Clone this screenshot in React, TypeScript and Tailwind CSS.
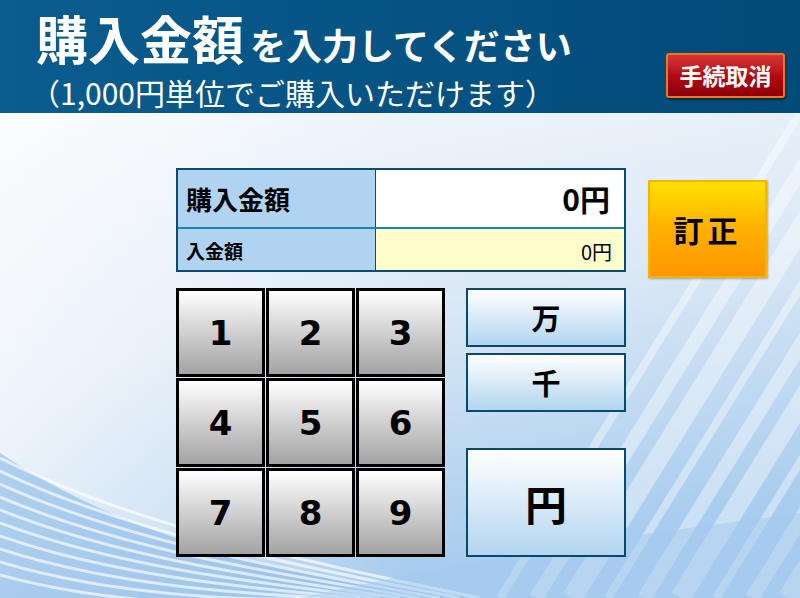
import React from "react";

const jp = "font-['Noto_Sans_CJK_JP','Noto_Sans',sans-serif]";

const keys = ["1", "2", "3", "4", "5", "6", "7", "8", "9"];

function Waves() {
  // background decoration: diagonal light streaks + sweeping curves
  const curves = Array.from({ length: 10 }, (_, i) => i);
  const streaks = Array.from({ length: 10 }, (_, i) => i);
  return (
    <svg className="absolute inset-0 w-full h-full" viewBox="0 0 800 485" preserveAspectRatio="none">
      <defs>
        <linearGradient id="bg" x1="0" y1="0" x2="0.3" y2="1">
          <stop offset="0" stopColor="#f4f8fc" />
          <stop offset="0.5" stopColor="#dce9f6" />
          <stop offset="1" stopColor="#a9cdee" />
        </linearGradient>
        <linearGradient id="bg2" x1="0" y1="0" x2="1" y2="0">
          <stop offset="0" stopColor="#ffffff" stopOpacity="0.6" />
          <stop offset="0.5" stopColor="#ffffff" stopOpacity="0" />
        </linearGradient>
      </defs>
      <rect width="800" height="485" fill="url(#bg)" />
      <rect width="800" height="485" fill="url(#bg2)" />
      {streaks.map((i) => (
        <path
          key={i}
          d={`M${500 + i * 36} 485 L${800 + i * 36} 0`}
          stroke="#ffffff"
          strokeOpacity={0.4}
          strokeWidth={8 + (i % 3) * 6}
        />
      ))}
      <path d="M0 340 C120 420 260 460 470 485 L0 485 Z" fill="#8dbbe8" opacity="0.65" />
      {curves.map((i) => (
        <path
          key={i}
          d={`M0 ${345 + i * 13} C120 ${405 + i * 10} 260 ${440 + i * 6} ${480 - i * 20} 485`}
          stroke="#ffffff"
          strokeOpacity={0.65}
          strokeWidth={3}
          fill="none"
        />
      ))}
      <path d="M300 485 C500 440 650 420 800 400 L800 485 Z" fill="#a3c9ee" opacity="0.5" />
    </svg>
  );
}

export default function App() {
  return (
    <div className={`w-[800px] h-[598px] flex flex-col overflow-hidden ${jp}`}>
      <header className="h-[113px] shrink-0 bg-gradient-to-r from-[#0b5c8f] to-[#024a78] flex items-start justify-between pl-[36px] pr-[15px]">
        <div className="flex flex-col text-white">
          <div className="flex items-baseline">
            <span className="text-[52px] font-bold leading-[76px]">購入金額</span>
            <span className="text-[36px] font-bold leading-[76px] ml-[6px]">を入力してください</span>
          </div>
          <div className="text-[30px] leading-[44px] ml-[-6px] mt-[-12px]">（1,000円単位でご購入いただけます）</div>
        </div>
        <button className="mt-[53px] w-[119px] h-[45px] rounded-[3px] border-2 border-[#f07a10] bg-gradient-to-b from-[#d8333a] via-[#b40a12] to-[#8f0007] text-white text-[23px] font-bold leading-none shadow-[1px_2px_2px_rgba(0,0,0,0.45)]">
          手続取消
        </button>
      </header>

      <main className="relative flex-1">
        <Waves />
        <div className="relative flex flex-col pl-[176px] pt-[55px]">
          <div className="flex items-start gap-[22px]">
            <div className="w-[450px] border-2 border-[#0f4c6c] bg-[#b0d3f1]">
              <div className="flex h-[59px] border-b-2 border-[#1c83b5]">
                <div className="w-[198px] border-r border-[#0f4c6c] flex items-center pl-[8px] text-[26px] font-bold text-black">購入金額</div>
                <div className="flex-1 bg-white flex items-center justify-end pr-[14px] text-[30px] font-bold text-black">0円</div>
              </div>
              <div className="flex h-[41px]">
                <div className="w-[198px] border-r border-[#0f4c6c] flex items-center pl-[8px] pt-[4px] text-[19px] font-bold text-black">入金額</div>
                <div className="flex-1 bg-[#ffffcc] flex items-center justify-end pr-[12px] pt-[4px] text-[20px] text-black">0円</div>
              </div>
            </div>
            <button className="mt-[12px] w-[119px] h-[98px] border-2 border-[#f5b400] bg-gradient-to-b from-[#ffe000] via-[#ffb000] to-[#ff9600] text-[30px] font-bold text-black tracking-[4px] shadow-[1px_1px_2px_rgba(0,0,0,0.3)]">
              訂正
            </button>
          </div>

          <div className="flex items-start gap-[21px] mt-[10px]">
            <div className="grid grid-cols-3 gap-[1px] w-[269px]">
              {keys.map((k) => (
                <button
                  key={k}
                  className="h-[89px] border-[3px] border-black bg-gradient-to-b from-white to-[#a3a3a3] text-[34px] font-bold text-black font-['DejaVu_Sans',sans-serif] leading-none"
                >
                  {k}
                </button>
              ))}
            </div>
            <div className="w-[160px] flex flex-col">
              <button className="h-[59px] border-2 border-[#0a4a68] bg-gradient-to-b from-white to-[#b2d5f0] text-[29px] font-bold text-black leading-none">万</button>
              <button className="h-[59px] mt-[6px] border-2 border-[#0a4a68] bg-gradient-to-b from-white to-[#b2d5f0] text-[29px] font-bold text-black leading-none">千</button>
              <button className="h-[109px] mt-[36px] border-2 border-[#0a4a68] bg-gradient-to-b from-white to-[#b2d5f0] text-[42px] font-bold text-black leading-none">円</button>
            </div>
          </div>
        </div>
      </main>
    </div>
  );
}
